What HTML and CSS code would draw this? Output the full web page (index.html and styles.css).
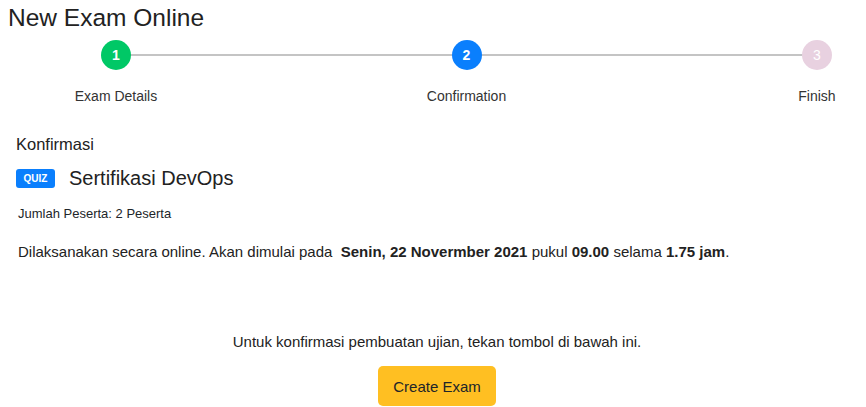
FILE: index.html
```html
<!DOCTYPE html>
<html>
<head>
<meta charset="utf-8">
<link rel="stylesheet" href="styles.css">
</head>
<body>
<h1 class="page-title">New Exam Online</h1>
<div class="stepper">
  <div class="stepper-line"></div>
  <div class="step">
    <div class="step-circle done">1</div>
    <div class="step-label">Exam Details</div>
  </div>
  <div class="step">
    <div class="step-circle active">2</div>
    <div class="step-label">Confirmation</div>
  </div>
  <div class="step">
    <div class="step-circle pending">3</div>
    <div class="step-label">Finish</div>
  </div>
</div>
<section class="confirm">
  <h2 class="section-title">Konfirmasi</h2>
  <div class="exam-head">
    <span class="badge">QUIZ</span>
    <span class="exam-name">Sertifikasi DevOps</span>
  </div>
  <p class="participants">Jumlah Peserta: 2 Peserta</p>
  <p class="schedule">Dilaksanakan secara online. Akan dimulai pada &nbsp;<b>Senin, 22 Novermber 2021</b> pukul <b>09.00</b> selama <b>1.75 jam</b>.</p>
</section>
<section class="footer">
  <p class="note">Untuk konfirmasi pembuatan ujian, tekan tombol di bawah ini.</p>
  <button class="btn-create">Create Exam</button>
</section>
</body>
</html>
```

FILE: styles.css
```css
* { box-sizing: border-box; }
html, body { overflow: hidden; }
body {
  margin: 0;
  padding: 0 8px;
  font-family: "Liberation Sans", Arial, sans-serif;
  color: #212529;
  background: #fff;
}
.page-title {
  margin: 0;
  padding-top: 3px;
  font-size: 24.5px;
  font-weight: 400;
  line-height: 29px;
  color: #222;
}
.stepper {
  position: relative;
  display: flex;
  justify-content: space-between;
  margin: 8px 1px 0 68px;
}
.stepper-line {
  position: absolute;
  left: 40px;
  right: 40px;
  top: 14px;
  height: 2px;
  background: #c4c4c4;
}
.step {
  position: relative;
  width: 80px;
  display: flex;
  flex-direction: column;
  align-items: center;
}
.step-circle {
  width: 30px;
  height: 30px;
  border-radius: 50%;
  color: #fff;
  font-size: 14px;
  font-weight: 700;
  display: flex;
  align-items: center;
  justify-content: center;
}
.step-circle.done { background: #00c866; }
.step-circle.active { background: #0a7ffd; }
.step-circle.pending { background: #e8d1e0; font-weight: 400; }
.step-label {
  margin-top: 18px;
  font-size: 14px;
  line-height: 16px;
  color: #333;
  white-space: nowrap;
}
.confirm { padding-left: 8px; }
.section-title {
  margin: 30px 0 0;
  font-size: 16.5px;
  font-weight: 400;
  line-height: 20px;
  color: #222;
}
.exam-head {
  display: flex;
  align-items: center;
  margin-top: 13px;
}
.badge {
  display: inline-block;
  width: 39px;
  height: 19px;
  line-height: 19px;
  text-align: center;
  background: #0a7ffd;
  color: #fff;
  font-size: 10px;
  font-weight: 700;
  border-radius: 3px;
}
.exam-name {
  margin-left: 14px;
  font-size: 20px;
  color: #222;
}
.participants {
  margin: 16px 0 0 2px;
  font-size: 13px;
  line-height: 16px;
}
.schedule {
  margin: 21px 0 0 2px;
  font-size: 15px;
  line-height: 18px;
  color: #222;
}
.schedule b { font-weight: 700; }
.footer {
  display: flex;
  flex-direction: column;
  align-items: center;
  margin-top: 72px;
  padding-left: 8px;
}
.note {
  margin: 0;
  font-size: 15px;
  line-height: 18px;
  color: #222;
}
.btn-create {
  margin-top: 15px;
  width: 118px;
  height: 40px;
  border: none;
  border-radius: 5px;
  background: #ffbf22;
  color: #212529;
  font-family: "Liberation Sans", Arial, sans-serif;
  font-size: 15px;
}
```
